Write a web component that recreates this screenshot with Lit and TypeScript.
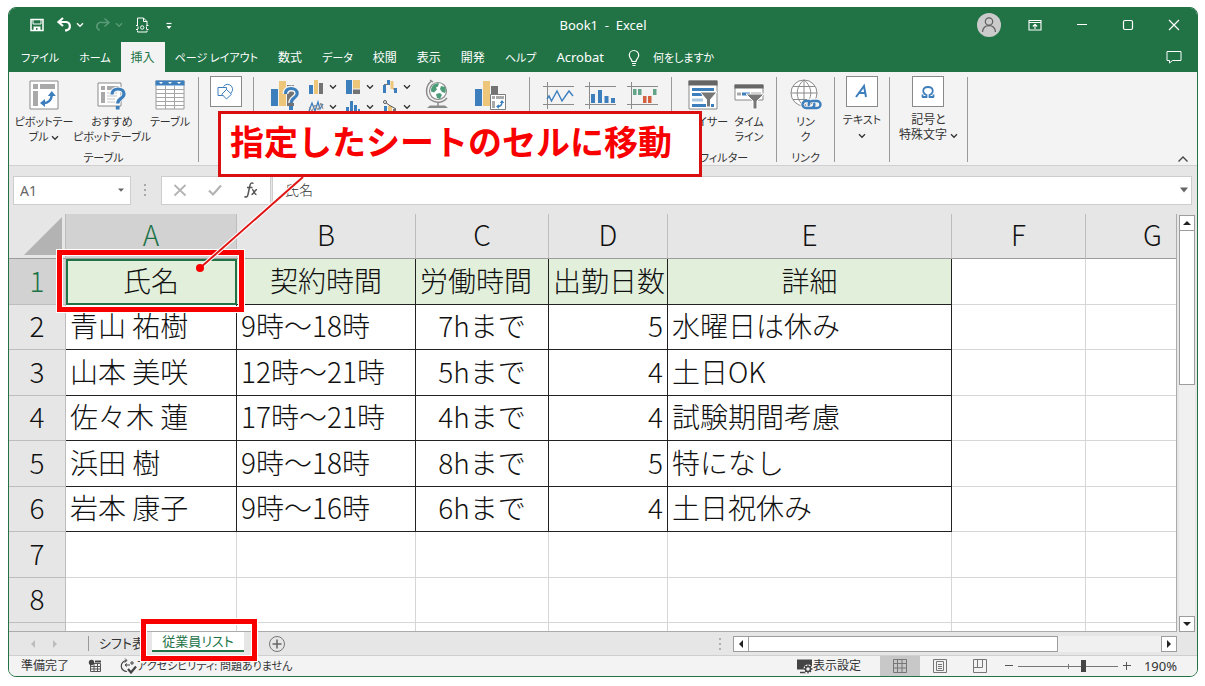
import { LitElement, html, css, svg, nothing } from "lit";
import { customElement, property } from "lit/decorators.js";
import { classMap } from "lit/directives/class-map.js";

const chevron = html`<svg class="chev" width="8" height="6" viewBox="0 0 8 6" aria-hidden="true">
  <path d="M1 1.3 4 4.3 7 1.3" fill="none" stroke="currentColor" stroke-width="1.3" />
</svg>`;

const pic = (w: number, h: number, body: unknown) =>
  html`<svg width=${w} height=${h} viewBox="0 0 ${w} ${h}" fill="none" aria-hidden="true">${body}</svg>`;

const BLUE = "#3d7ebd";
const GOLD = "#eec67a";
const GREY = "#737373";

const icons = {
  save: pic(16, 16, svg`<path d="M2 2.5h12v11H2z" stroke="#fff" stroke-width="1.5"/><path d="M4 2.5v4.5h8V2.5" stroke="#fff" stroke-width="1"/><path d="M4.5 13.500v-4h7v4h-3v-2.500H7v2.500z" fill="#fff"/>`),
  undo: pic(16, 16, svg`<path d="M7 1 2.500 5l4.500 4M3 5h7a4.200 4.200 0 0 1 .5 8.300H9" stroke="#fff" stroke-width="2.200"/>`),
  redo: pic(16, 16, svg`<path d="M9.500 1.500 14 5.500l-4.500 4M13.500 5.500H7a4 4 0 0 0-4.500 6l2 2" stroke="#5b9a77" stroke-width="1.600"/>`),
  doc: pic(16, 16, svg`<path d="M3.500 9V1h6l3.500 3.500V9M9.500 1v3.500H13M3.500 13.500v1.500H13v-1.500" stroke="#fff"/><path d="M2 8.500h2M12.500 8.500h2M2 12.500h2M12.500 12.500h2" stroke="#fff"/><circle cx="8.200" cy="10.500" r="1.700" stroke="#fff"/><path d="M4 9.500v2.500M12.500 9.500v2.500" stroke="#fff"/>`),
  more: pic(16, 16, svg`<path d="M5.500 6.500h5" stroke="#fff" stroke-width="1.200"/><path d="M5.500 9h5L8 12z" fill="#fff"/>`),
  avatar: pic(24, 24, svg`<circle cx="12" cy="12" r="12" fill="#cbcbcb"/><circle cx="12" cy="8.500" r="3.700" stroke="#5f5f5f" stroke-width="1.200"/><path d="M5.500 19c.4-4 2.900-6.300 6.500-6.300s6.100 2.300 6.500 6.300" stroke="#5f5f5f" stroke-width="1.200"/>`),
  ribbonMode: pic(14, 12, svg`<path d="M1 1.500h12v9.500H1zM1 3.500h12M7 10V5.500M4.800 7.500 7 5.300l2.200 2.200" stroke="#fff" stroke-width="1.100"/>`),
  min: pic(12, 12, svg`<path d="M1 5.500h10" stroke="#fff"/>`),
  max: pic(12, 12, svg`<rect x="1.500" y="1.500" width="9" height="9" rx="1.500" stroke="#fff" stroke-width="1.200"/>`),
  close: pic(12, 12, svg`<path d="m1 1 10 10M11 1 1 11" stroke="#fff" stroke-width="1.200"/>`),
  comment: pic(16, 14, svg`<path d="M1 1.500h14v9H6.500L3.500 13v-2.500H1z" stroke="#fff"/>`),
  bulb: pic(12, 18, svg`<path d="M4 12.500c0-2.300-2.700-3-2.700-6.300a4.700 4.700 0 0 1 9.400 0c0 3.300-2.700 4-2.700 6.300zM4 14.500h4M4.500 16.500h3" stroke="#fff" stroke-width="1.200"/>`),
  pivot: pic(30, 30, svg`<path d="M1 1h28v28H1z" fill="#fff" stroke="#8a8a8a"/><path d="M4 4h5v5H4zM11 4h15v5H11zM4 11h5v15H4z" fill="#a9a9a9"/><path d="M13.500 23c5.500.5 9-2.500 9.300-8.500" stroke="${BLUE}" stroke-width="2.400"/><path d="m18.800 16 4-5 4 5zM16 19l-5 4 5 4z" fill="${BLUE}"/>`),
  recommend: pic(30, 30, svg`<path d="M1 3h23v23H1z" fill="#fff" stroke="#8a8a8a"/><path d="M4 6h4v4H4zM10 6h12v4H10zM4 12h4v11H4z" fill="#a9a9a9"/><path d="M10 13h10M10 16h10M10 19h8M10 22h8" stroke="#c4c4c4"/><path d="M15 14.500c0-4 3-5.500 6-5.500 3.300 0 6 1.800 6 5 0 4.700-6.300 4-6.300 9.500" stroke="#f3f3f3" stroke-width="5"/><path d="M15 14.500c0-4 3-5.500 6-5.500 3.300 0 6 1.800 6 5 0 4.700-6.300 4-6.300 9.500" stroke="${BLUE}" stroke-width="3.200"/><path d="M18.800 26h3.800v3.500h-3.800z" fill="${BLUE}"/>`),
  table: pic(30, 30, svg`<path d="M1 1h28v28H1z" fill="#fff" stroke="#9a9a9a"/><path d="M.500.500h29v5H.500z" fill="${BLUE}"/><path d="m4 2 2 2 2-2M13 2l2 2 2-2M22 2l2 2 2-2" fill="#fff"/><path d="M1 9.500h28M1 13.500h28M1 17.500h28M1 21.500h28M1 25.500h28M10.500 5.500V29M19.500 5.500V29" stroke="#a6a6a6"/>`),
  shapes: pic(18, 18, svg`<path d="M1 4.500h8.500v8H1z" stroke="${BLUE}"/><path d="M6.500 3.500a5 5 0 1 1 6 7.500" stroke="${BLUE}"/><path d="m9.500 6.500 5 4.700-5 4.800-4.700-4.800z" fill="#fff" stroke="${BLUE}"/>`),
  recChart: pic(30, 32, svg`<path d="M1 10h7v17H1z" fill="${BLUE}"/><path d="M9 2h7v25H9z" fill="${GOLD}"/><path d="M17 6h7v21h-7z" fill="${GREY}"/><path d="M15.500 15c0-4 2.700-5.500 5.700-5.500s6 1.700 6 5c0 4.700-6 4-6 9.500" stroke="#f3f3f3" stroke-width="6"/><path d="M15.500 15c0-4 2.700-5.500 5.700-5.500s6 1.700 6 5c0 4.700-6 4-6 9.500" stroke="${BLUE}" stroke-width="3.200"/><path d="M19 27h4v4h-4z" fill="${BLUE}"/>`),
  column: pic(16, 16, svg`<path d="M1 6h4v9H1z" fill="${BLUE}"/><path d="M6 1h4v14H6z" fill="${GOLD}"/><path d="M11 4h4v11h-4z" fill="${GREY}"/>`),
  tree: pic(16, 16, svg`<path d="M1 1h6v14H1z" fill="${BLUE}"/><path d="M8 1h7v8.500H8z" fill="${GOLD}"/><path d="M8 10.500h7V15H8z" fill="${GREY}"/>`),
  waterfall: pic(16, 16, svg`<path d="M1 6h3v8H1zM5 1h3v5H5zM12 9h3v5h-3z" fill="${BLUE}"/><path d="M8.500 2h3v8h-3z" fill="${GOLD}"/><path d="M2 5.500h4M11 10h2" stroke="${GREY}"/>`),
  line: pic(16, 16, svg`<path d="m1 12 3-8 3 8 3-9 2 7 3-5" stroke="${BLUE}" stroke-width="1.300"/><path d="m1 8 3 4 3-6 3 5 3-7 2 6" stroke="#8a8a8a"/>`),
  histogram: pic(16, 16, svg`<path d="M1 8h3v7H1zM5 2h3v13H5zM9 6h3v9H9zM13 10h2v5h-2z" fill="${BLUE}"/>`),
  combo: pic(16, 16, svg`<path d="M2 7h3v8H2z" fill="${BLUE}"/><path d="M6 7h4v8H6z" fill="${GOLD}"/><path d="M11 10h3v5h-3z" fill="${GREY}"/><path d="m3 3 4 3 7 4" stroke="#555"/><circle cx="3" cy="3" r="1.500" fill="#fff" stroke="#555"/>`),
  map: pic(26, 32, svg`<circle cx="14" cy="12" r="8.500" fill="#fff" stroke="#8a8a8a" stroke-width="1.200"/><path d="M9 6.500c2-2 4-2.500 6-2l-1 3-2 1 1 2-3 3-3-1c-.3-2 .5-4.500 2-6zM17 7l4 1c1 2 1 4 0 6l-3-1-2-3zM12 15l4-1 2 2-2 4-3-1z" fill="#4d9d78"/><path d="M7.500 2C1 7 1 17 7 21c5 3.500 12 3 16-2M14 23v4M6 1l3 2" stroke="#8a8a8a" stroke-width="1.500"/><path d="M3 29h21l-3-2.500H6z" fill="#8a8a8a"/>`),
  pivotChart: pic(32, 32, svg`<path d="M1 10h7v17H1z" fill="${BLUE}"/><path d="M9 2h7v25H9z" fill="${GOLD}"/><path d="M17 7h7v8h-7z" fill="${GREY}"/><path d="M16.500 15.500h15v15h-15z" fill="#fff" stroke="#7d7d7d"/><path d="M18 17h3v3h-3zM22 17h8v3h-8zM18 22h3v7h-3z" fill="#a9a9a9"/><path d="M23.500 27.500c3 0 4.500-1.500 4.500-4.500" stroke="${BLUE}" stroke-width="1.500"/><path d="m25.700 24 2.300-3 2.300 3zM25 25.200l-3 2.300 3 2.300z" fill="${BLUE}"/>`),
  sparkLine: pic(32, 28, svg`<path d="M4.500 0v27M0 4.500h31M0 22.500h31" stroke="#8a8a8a"/><path d="m4 17 2-3 2.500 5L14 9l5 10 7-10 4 5" stroke="${BLUE}" stroke-width="1.400"/>`),
  sparkColumn: pic(32, 28, svg`<path d="M4.500 0v27M0 4.500h31M0 22.500h31" stroke="#8a8a8a"/><path d="M6 12h4v9H6zM13 8h4v13h-4zM19.500 14h4v7h-4zM26 16h4v5h-4z" fill="${BLUE}"/>`),
  sparkWin: pic(32, 28, svg`<path d="M4.500 0v27M0 4.500h31M0 22.500h31" stroke="#8a8a8a"/><path d="M6 7h3.500v6H6zM11 7h3.500v6H11zM26 7h3.500v6H26z" fill="#62a487"/><path d="M16 14h3.500v7H16zM21 14h3.500v7H21z" fill="#d4603f"/>`),
  slicer: pic(30, 30, svg`<path d="M1 1h28v28H1z" fill="#fff" stroke="#8a8a8a"/><path d="M.500.500h29v5H.500z" fill="#666"/><path d="M4 8h22v3H4zM4 13h10v3H4zM4 24h22v3H4z" fill="${BLUE}"/><path d="M4 18.500h11v3H4z" fill="#a9c6e0"/><path d="M12 12h17l-6.500 7.500V27h-4v-7.500z" fill="#777" stroke="#fff"/>`),
  timeline: pic(30, 30, svg`<path d="M1 5h28v15H1z" fill="#fff" stroke="#8a8a8a"/><path d="M.500 4.500h29v4H.500z" fill="#666"/><path d="M3 12.500h4v3H3z" fill="#a8a8a8"/><path d="M8 12.500h8v3H8z" fill="${BLUE}"/><path d="M17 12.500h10v3H17z" fill="#a8a8a8"/><path d="M12 14h18l-7 7v8h-4v-8z" fill="#777" stroke="#fff"/>`),
  link: pic(32, 32, svg`<circle cx="14" cy="14" r="13" fill="#fff" stroke="#8a8a8a"/><path d="M14 1v26M1 14h26M3 7.500h22M3 20.500h22M14 1C5 8 5 20 14 27M14 1c9 7 9 19 0 26" stroke="#8a8a8a"/><path d="M17 21.500h4.500a4 4 0 0 1 0 8H16a4 4 0 0 1-3-6M24 29.500h-2a4 4 0 0 1 0-8h5a4 4 0 0 1 2 7" stroke="#f3f3f3" stroke-width="4"/><path d="M20 22h-4a3.500 3.500 0 0 0 0 7h5a3.500 3.500 0 0 0 3-5M22 29h5a3.500 3.500 0 0 0 0-7h-5a3.500 3.500 0 0 0-3 5" stroke="${BLUE}" stroke-width="2.400"/>`),
  letter: pic(18, 18, svg`<path d="m3 14 8-11 2 11M6 10h7" stroke="${BLUE}" stroke-width="2"/>`),
  omega: pic(18, 18, svg`<path d="M3 14h4.500v-2C2.500 9.500 3.500 4 9 4s6.500 5.500 1.500 8v2H15M3.500 11.500V14M14.500 11.500V14" stroke="${BLUE}" stroke-width="1.800"/>`),
  calc: pic(14, 14, svg`<path d="M2.500 4.500h10v8h-10zM2.500 7.500h10M2.500 10h10M6 5v7.500M9.500 5v7.500" stroke="#555"/><circle cx="3.500" cy="3.500" r="2.700" fill="#444"/><path d="M7 1.500h6v2H7z" fill="#444"/>`),
  access: pic(18, 16, svg`<path d="M7.500 2.500A5.500 5.500 0 1 0 8 13.500" stroke="#444" stroke-width="1.200"/><path d="M5.500 4.500 8 2.500 6 .5M6 7h5M8 5.500 6 7l2 1.500M13 3v4M11 5h4" stroke="#444"/><path d="m9 11 3 3.500 5-6" stroke="#444" stroke-width="2.200"/>`),
  display: pic(17, 16, svg`<path d="M1 1.500h15v10H1z" fill="#444"/><path d="M4 14.500h6" stroke="#444" stroke-width="1.500"/><circle cx="12" cy="11" r="4.500" fill="#f3f3f3"/><circle cx="12" cy="11" r="2.500" stroke="#444" stroke-width="1.500"/><path d="M12 6.500v2M12 13.500v2M7.500 11h2M14.500 11h2M9 8l1 1M15 8l-1 1M9 14l1-1M15 14l-1-1" stroke="#444" stroke-width="1.300"/>`),
  normal: pic(14, 14, svg`<path d="M.5.5h13v13H.5zM.5 4.500h13M.5 9h13M4.500.5v13M9 .5v13" stroke="#777"/>`),
  page: pic(14, 14, svg`<path d="M.5.5h13v13H.5zM3.500 2.500h7v9h-7zM5 5.500h4M5 7.500h4M5 9.500h4" stroke="#777"/>`),
  breaks: pic(14, 14, svg`<path d="M.5.5h13v13H.5zM4.500.5v8M9.500.5v8M.5 8.500h9" stroke="#777"/>`),
};

@customElement("ribbon-button")
class RibbonButton extends LitElement {
  @property({ attribute: false }) icon: unknown;
  @property({ attribute: false }) lines: string[] = [];
  @property({ type: Boolean }) menu = false;
  @property({ type: Boolean }) boxed = false;
  static styles = css`
    :host { display: block; }
    button { display: flex; flex-direction: column; align-items: center; width: 100%; padding: 0; border: 0; background: none; color: #333; font: inherit; font-feature-settings: inherit; line-height: 15px; }
    .icon { display: flex; align-items: center; justify-content: center; height: 32px; margin: 6px 0 3px; }
    .boxed { box-sizing: border-box; width: 32px; height: 31px; margin: 3px 0 5px; border: 1px solid #8a8a8a; background: #fff; }
    .label { display: block; min-height: 15px; white-space: nowrap; }
  `;
  render() {
    const last = this.lines.length - 1;
    return html`<button type="button">
      <span class=${classMap({ icon: true, boxed: this.boxed })}>${this.icon}</span>
      ${this.lines.map((t, i) => html`<span class="label">${t}${this.menu && i === last ? html` ${chevron}` : nothing}</span>`)}
    </button>`;
  }
}

type Row = [string, string, string, string, string];

@customElement("sheet-grid")
class SheetGrid extends LitElement {
  static styles = css`
    :host { display: block; overflow: hidden; background: #fff; }
    table { width: 1211px; table-layout: fixed; border-collapse: separate; border-spacing: 0; font: 300 28px/40px "Noto Sans CJK JP", sans-serif; color: #111; }
    th, td { box-sizing: border-box; padding: 0 4px 4px; border: 0 solid #d6d6d6; border-width: 0 1px 1px 0; font-weight: 300; white-space: nowrap; overflow: hidden; }
    thead th { height: 45px; background: #e6e6e6; border-color: #bdbdbd; border-bottom-color: #9c9c9c; }
    thead th.on { background: #d2d2d2; color: #217346; }
    tbody th { background: #e6e6e6; border-color: #bdbdbd; }
    tbody th.on { background: #d2d2d2; color: #217346; }
    tbody tr { height: 46px; }
    tbody tr:nth-child(even) { height: 45px; }
    td { text-align: left; }
    td.mid { text-align: center; }
    td.num { text-align: right; }
    td.data { border-color: #222; }
    td.head { background: #e2efda; text-align: center; border-color: #222; }
    td.start { text-align: left; }
    td.cur { outline: 2px solid #217346; outline-offset: -2px; }
    .corner { padding: 0; text-align: right; vertical-align: bottom; }
    .corner svg { display: block; margin: 0 2px 2px auto; }
    .rownum { width: 57px; } .a { width: 171px; } .b { width: 179px; } .c { width: 133px; } .d { width: 119px; } .e { width: 284px; } .f { width: 134px; }
  `;
  private rows: Row[] = [
    ["青山 祐樹", "9時～18時", "7hまで", "5", "水曜日は休み"],
    ["山本 美咲", "12時～21時", "5hまで", "4", "土日OK"],
    ["佐々木 蓮", "17時～21時", "4hまで", "4", "試験期間考慮"],
    ["浜田 樹", "9時～18時", "8hまで", "5", "特になし"],
    ["岩本 康子", "9時～16時", "6hまで", "4", "土日祝休み"],
  ];
  render() {
    const head = ["氏名", "契約時間", "労働時間", "出勤日数", "詳細"];
    const blanks = (n: number) => Array.from({ length: n }, () => html`<td></td>`);
    return html`<table>
      <colgroup><col class="rownum" /><col class="a" /><col class="b" /><col class="c" /><col class="d" /><col class="e" /><col class="f" /><col class="f" /></colgroup>
      <thead><tr>
        <th class="corner"><svg width="40" height="39" viewBox="0 0 40 39" aria-hidden="true"><path d="M39 0v38H1z" fill="#b3b3b3" /></svg></th>
        ${["A", "B", "C", "D", "E", "F", "G"].map((c, i) => html`<th scope="col" class=${classMap({ on: i === 0 })}>${c}</th>`)}
      </tr></thead>
      <tbody>
        <tr><th scope="row" class="on">1</th>${head.map((t, i) => html`<td class=${classMap({ head: true, cur: i === 0, start: i === 2 })}>${t}</td>`)}${blanks(2)}</tr>
        ${this.rows.map((r, n) => html`<tr><th scope="row">${n + 2}</th>
          ${r.map((t, i) => html`<td class=${classMap({ data: true, mid: i === 2, num: i === 3 })}>${t}</td>`)}${blanks(2)}</tr>`)}
        ${["7", "8", ""].map((n) => html`<tr><th scope="row">${n}</th>${blanks(7)}</tr>`)}
      </tbody>
    </table>`;
  }
}

@customElement("app-root")
class AppRoot extends LitElement {
  static styles = css`
    :host { display: block; box-sizing: border-box; height: 100vh; padding: 7px 7px 9px 8px; background: #fff; color: #333; font: 12px/16px "Noto Sans", "Noto Sans CJK JP", sans-serif; font-feature-settings: "palt"; }
    button, input { font: inherit; color: inherit; font-feature-settings: inherit; }
    button { display: flex; align-items: center; justify-content: center; padding: 0; border: 0; background: none; white-space: nowrap; }
    input { box-sizing: border-box; border: 0; background: none; outline: 0; min-width: 0; }
    .window { position: relative; box-sizing: border-box; height: 100%; display: flex; flex-direction: column; border: 1px solid #217346; border-radius: 8px; background: #e6e6e6; }
    .title { display: grid; grid-template-columns: 1fr auto 1fr; align-items: center; height: 34px; background: #217346; color: #fff; border-radius: 7px 7px 0 0; }
    .qat { display: flex; gap: 11px; padding-left: 20px; }
    .split { display: flex; gap: 4px; align-items: center; }
    .dim { color: #5b9a77; }
    .name { font-size: 13px; white-space: pre; }
    .controls { display: flex; align-items: center; justify-content: flex-end; gap: 34px; padding-right: 17px; }
    .controls button:first-child { margin-right: -7px; }
    .tabs { display: flex; height: 30px; padding: 0 15px 0 2px; background: #217346; color: #fff; }
    .tabs button { padding: 1px 10px 0; }
    .tabs .on { background: #f3f3f3; color: #217346; }
    .tabs .latin { font-size: 13px; padding-top: 0; }
    .tabs .kana { font-size: 11px; }
    .tabs .tell { gap: 13px; padding-left: 14px; font-size: 11px; }
    .tabs .end { margin-left: auto; padding: 0; }
    .ribbon { display: flex; height: 93px; background: #f3f3f3; border-bottom: 1px solid #d0d0d0; font-size: 11px; }
    .group { display: flex; flex-direction: column; justify-content: space-between; box-sizing: border-box; height: 85px; margin-top: 5px; border-right: 1px solid #9a9a9a; }
    .items { display: flex; justify-content: center; margin-top: -4px; }
    .caption { text-align: center; line-height: 15px; margin-bottom: -3px; }
    .g1 { width: 190px; } .g1 .items { justify-content: flex-start; } .g1 ribbon-button:nth-child(1) { width: 70px; } .g1 ribbon-button:nth-child(2) { width: 66px; } .g1 ribbon-button:nth-child(3) { width: 50px; }
    .g2 { width: 55px; } .g3 { width: 276px; } .g4 { width: 142px; } .g5 { width: 105px; } .g6 { width: 58px; } .g7 { width: 55px; } .g8 { width: 78px; font-size: 12px; }
    .g5 ribbon-button { width: 46px; }
    .g5 .items { padding-left: 4px; }
    .g3 .items { justify-content: flex-start; padding-left: 16px; }
    .mini { display: grid; grid-template-columns: repeat(3, 37px); grid-auto-rows: 20px; margin: 4px 5px 0 8px; }
    .mini button { gap: 5px; justify-content: flex-start; }
    .big { align-items: flex-start; margin: 6px 0 0; }
    .big.last { margin-left: 24px; }
    .sparks { display: flex; gap: 10px; padding-top: 9px; }
    .fold { margin: auto 8px 2px auto; }
    .formula { display: flex; align-items: center; gap: 10px; height: 48px; padding: 0 5px 0 4px; }
    .box { display: flex; align-items: center; box-sizing: border-box; height: 29px; background: #fff; border: 1px solid #cdcdcd; }
    .namebox { width: 118px; padding-right: 5px; }
    .namebox input { flex: 1; padding: 2px 6px 0; font-size: 14px; color: #666; }
    .fx { width: 110px; justify-content: space-around; margin-left: 2px; }
    .bar { flex: 1; margin-left: -9px; padding-right: 2px; }
    .bar input { flex: 1; padding-left: 12px; font-size: 14px; font-weight: 300; }
    .body { display: flex; flex: 1; min-height: 0; gap: 2px; padding-right: 2px; }
    sheet-grid { flex: 1; min-width: 0; border-right: 1px solid #ababab; border-bottom: 1px solid #ababab; }
    .vscroll { display: flex; flex-direction: column; width: 16px; padding-top: 1px; }
    .vscroll button, .hscroll button { box-sizing: border-box; width: 16px; height: 16px; flex: none; border: 1px solid #9d9d9d; background: #fff; }
    .track { flex: 1; min-width: 0; background: #f0f0f0; }
    .vscroll .thumb { box-sizing: border-box; height: 40%; border: 1px solid #9d9d9d; border-top: 0; background: #fff; }
    .sheets { display: flex; align-items: center; height: 23px; padding-right: 20px; }
    .sheets .nav { display: flex; gap: 14px; padding: 0 29px 0 20px; }
    .sheets .tab { height: 15px; padding: 0 0 2px 10px; border-left: 1px solid #999; font-size: 13px; width: 64px; justify-content: flex-start; }
    .sheets .current { align-self: flex-start; width: 92px; height: 20px; background: #fff; border-bottom: 2px solid #217346; color: #217346; font-size: 13px; }
    .sheets .add { margin-left: 24px; }
    .grip { margin: 0 11px 0 auto; }
    .hscroll { display: flex; width: 444px; height: 16px; }
    .hscroll .thumb { box-sizing: border-box; width: 75%; height: 16px; border: 1px solid #9d9d9d; border-left: 0; background: #fff; }
    .status { display: flex; align-items: center; height: 21px; box-sizing: border-box; padding: 0 20px 0 12px; border-top: 1px solid #cfcfcf; border-radius: 0 0 7px 7px; background: #f3f3f3; }
    .status .macro { margin: 0 17px 0 19px; }
    .status .acc { font-size: 11px; }
    .status .views { display: flex; align-self: stretch; margin: 0 5px 0 19px; }
    .views button { width: 40px; }
    .views .on { background: #c8c8c8; }
    .status .disp { margin-left: auto; }
    .zoomer { display: flex; align-items: center; gap: 5px; }
    .percent { width: 46px; text-align: right; font-size: 13px; }
    input[type="range"] { appearance: none; width: 100px; height: 14px; margin: 0; background: linear-gradient(#777, #777) 50% 50% / 100% 1px no-repeat, linear-gradient(#777, #777) 50% 50% / 1px 5px no-repeat; }
    input[type="range"]::-webkit-slider-thumb { appearance: none; width: 5px; height: 12px; background: #444; }
    .callout { position: absolute; left: 209px; top: 103px; box-sizing: border-box; width: 484px; height: 66px; padding-left: 9px; border: 3px solid #d9100f; background: #fff; color: #f80000; font: 700 34px/54px "Noto Sans CJK JP", sans-serif; font-feature-settings: normal; white-space: nowrap; }
    .leader { position: absolute; left: 186px; top: 168px; }
    .ring { position: absolute; box-sizing: border-box; border: 5px solid #f80000; box-shadow: 0 0 0 1px #fff, inset 0 0 0 1px #fff; pointer-events: none; }
    .ring.cell { left: 48px; top: 242px; width: 187px; height: 62px; }
    .ring.sheet { left: 132px; top: 611px; width: 116px; height: 42px; }
  `;

  private arrow(d: string, color = "#222") {
    return html`<svg width="8" height="8" viewBox="0 0 8 8" aria-hidden="true"><path d=${d} fill=${color} /></svg>`;
  }

  private mini = [icons.column, icons.tree, icons.waterfall, icons.line, icons.histogram, icons.combo];

  render() {
    const tabs = ["ファイル", "ホーム", "挿入", "ページ レイアウト", "数式", "データ", "校閲", "表示", "開発", "ヘルプ", "Acrobat"];
    return html`<div class="window">
      <header class="title">
        <div class="qat">
          <button aria-label="上書き保存">${icons.save}</button>
          <span class="split"><button aria-label="元に戻す">${icons.undo}</button>${chevron}</span>
          <span class="split dim"><button aria-label="やり直し">${icons.redo}</button>${chevron}</span>
          <button aria-label="印刷プレビュー">${icons.doc}</button>
          <button aria-label="カスタマイズ">${icons.more}</button>
        </div>
        <div class="name">Book1  -  Excel</div>
        <div class="controls">
          <button aria-label="アカウント">${icons.avatar}</button>
          <button aria-label="リボンの表示オプション">${icons.ribbonMode}</button>
          <button aria-label="最小化">${icons.min}</button>
          <button aria-label="最大化">${icons.max}</button>
          <button aria-label="閉じる">${icons.close}</button>
        </div>
      </header>
      <nav class="tabs">
        ${tabs.map((t, i) => html`<button class=${classMap({ on: i === 2, kana: /^[ァ-ー ]+$/.test(t), latin: t === "Acrobat" })}>${t}</button>`)}
        <button class="tell">${icons.bulb}<span>何をしますか</span></button>
        <button class="end" aria-label="コメント">${icons.comment}</button>
      </nav>
      <section class="ribbon">
        <div class="group g1">
          <div class="items">
            <ribbon-button .icon=${icons.pivot} .lines=${["ピボットテー", "ブル"]} menu></ribbon-button>
            <ribbon-button .icon=${icons.recommend} .lines=${["おすすめ", "ピボットテーブル"]}></ribbon-button>
            <ribbon-button .icon=${icons.table} .lines=${["テーブル"]}></ribbon-button>
          </div>
          <div class="caption">テーブル</div>
        </div>
        <div class="group g2"><div class="items"><ribbon-button boxed .icon=${icons.shapes}></ribbon-button></div></div>
        <div class="group g3">
          <div class="items">
            <button class="big" aria-label="おすすめグラフ">${icons.recChart}</button>
            <div class="mini">${this.mini.map((m) => html`<button aria-label="グラフの挿入">${m}${chevron}</button>`)}</div>
            <button class="big" aria-label="マップ">${icons.map}</button>
            <button class="big last" aria-label="ピボットグラフ">${icons.pivotChart}</button>
          </div>
        </div>
        <div class="group g4"><div class="items"><div class="sparks">
          <button aria-label="折れ線">${icons.sparkLine}</button><button aria-label="縦棒">${icons.sparkColumn}</button><button aria-label="勝敗">${icons.sparkWin}</button>
        </div></div></div>
        <div class="group g5">
          <div class="items">
            <ribbon-button .icon=${icons.slicer} .lines=${["スライサー"]}></ribbon-button>
            <ribbon-button .icon=${icons.timeline} .lines=${["タイム", "ライン"]}></ribbon-button>
          </div>
          <div class="caption">フィルター</div>
        </div>
        <div class="group g6">
          <div class="items"><ribbon-button .icon=${icons.link} .lines=${["リン", "ク"]}></ribbon-button></div>
          <div class="caption">リンク</div>
        </div>
        <div class="group g7"><div class="items">
          <ribbon-button boxed menu .icon=${icons.letter} .lines=${["テキスト", ""]}></ribbon-button>
        </div></div>
        <div class="group g8"><div class="items">
          <ribbon-button boxed menu .icon=${icons.omega} .lines=${["記号と", "特殊文字"]}></ribbon-button>
        </div></div>
        <button class="fold" aria-label="リボンを折りたたむ"><svg width="12" height="8" viewBox="0 0 12 8"><path d="m1.500 6.500 4.500-4.500 4.500 4.500" fill="none" stroke="#444" stroke-width="1.300" /></svg></button>
      </section>
      <section class="formula">
        <div class="box namebox"><input aria-label="名前ボックス" .value=${"A1"} /><button aria-label="名前の一覧">${this.arrow("M1 2.500h6L4 5.800z", "#666")}</button></div>
        <svg width="8" height="14" viewBox="0 0 8 14" aria-hidden="true"><path d="M3 1h2v2H3zM3 6h2v2H3zM3 11h2v2H3z" fill="#a8a8a8" /></svg>
        <div class="box fx">
          <button aria-label="キャンセル"><svg width="14" height="14" viewBox="0 0 14 14"><path d="m1.500 2 11 10.500M12.500 2l-11 10.500" stroke="#b3b3b3" stroke-width="1.800" /></svg></button>
          <button aria-label="入力"><svg width="14" height="14" viewBox="0 0 14 14"><path d="m1 7.500 4 4 8-9" fill="none" stroke="#b3b3b3" stroke-width="2.200" /></svg></button>
          <button aria-label="関数の挿入"><svg width="16" height="18" viewBox="0 0 16 18"><path d="M10.500 2.500C8.500 1 7.300 2.500 6.800 5L5 13.500c-.500 2.500-1.800 3-3.500 2M4 6.500h5.500M9 8.500c2-.5 2 5.500 4.500 5M14 8.500c-2 0-3.500 5-5.500 5" fill="none" stroke="#555" stroke-width="1.500" /></svg></button>
        </div>
        <div class="box bar"><input aria-label="数式バー" .value=${"氏名"} /><button aria-label="数式バーの展開"><svg width="10" height="8" viewBox="0 0 10 8"><path d="M1 1.500h8L5 6.500z" fill="#666" /></svg></button></div>
      </section>
      <main class="body">
        <sheet-grid></sheet-grid>
        <div class="vscroll">
          <button aria-label="上へ">${this.arrow("M0 6h8L4 2z")}</button>
          <div class="track"><div class="thumb"></div></div>
          <button aria-label="下へ">${this.arrow("M0 2h8L4 6z")}</button>
        </div>
      </main>
      <div class="sheets">
        <div class="nav"><button aria-label="前のシート">${this.arrow("M6 0v8L2 4z", "#bdbdbd")}</button><button aria-label="次のシート">${this.arrow("M2 0v8l4-4z", "#bdbdbd")}</button></div>
        <button class="tab">シフト表</button>
        <button class="current">従業員リスト</button>
        <button class="add" aria-label="新しいシート"><svg width="18" height="18" viewBox="0 0 18 18"><path d="M9 4.500v9M4.500 9h9" stroke="#666" stroke-width="1.500" /><circle cx="9" cy="9" r="7.500" fill="none" stroke="#777" /></svg></button>
        <svg class="grip" width="4" height="12" viewBox="0 0 4 12" aria-hidden="true"><path d="M1 0h2v2H1zM1 5h2v2H1zM1 10h2v2H1z" fill="#b0b0b0" /></svg>
        <div class="hscroll">
          <button aria-label="左へ">${this.arrow("M6 0v8L2 4z")}</button>
          <div class="track"><div class="thumb"></div></div>
          <button aria-label="右へ">${this.arrow("M2 0v8l4-4z")}</button>
        </div>
      </div>
      <footer class="status">
        <span>準備完了</span>
        <button class="macro" aria-label="マクロの記録">${icons.calc}</button>
        <button class="acc">${icons.access}<span>アクセシビリティ: 問題ありません</span></button>
        <button class="disp">${icons.display}<span>表示設定</span></button>
        <div class="views"><button class="on" aria-label="標準">${icons.normal}</button><button aria-label="ページ レイアウト">${icons.page}</button><button aria-label="改ページ プレビュー">${icons.breaks}</button></div>
        <div class="zoomer">
          <button aria-label="縮小"><svg width="8" height="8" viewBox="0 0 8 8"><path d="M0 3.500h8" stroke="#555" /></svg></button>
          <input type="range" aria-label="ズーム" aria-valuetext="190%" min="0" max="100" .value=${"66"} />
          <button aria-label="拡大"><svg width="8" height="8" viewBox="0 0 8 8"><path d="M0 3.500h8M3.500 0v8" stroke="#555" /></svg></button>
        </div>
        <span class="percent">190%</span>
      </footer>
      <div class="ring cell"></div>
      <div class="ring sheet"></div>
      <svg class="leader" width="112" height="100" viewBox="0 0 112 100" aria-hidden="true">
        <path d="M108 1 5 92" stroke="#fff" stroke-width="4" /><path d="M108 1 5 92" stroke="#e01515" stroke-width="2" /><circle cx="5" cy="92" r="4" fill="#f80000" />
      </svg>
      <div class="callout">指定したシートのセルに移動</div>
    </div>`;
  }
}
